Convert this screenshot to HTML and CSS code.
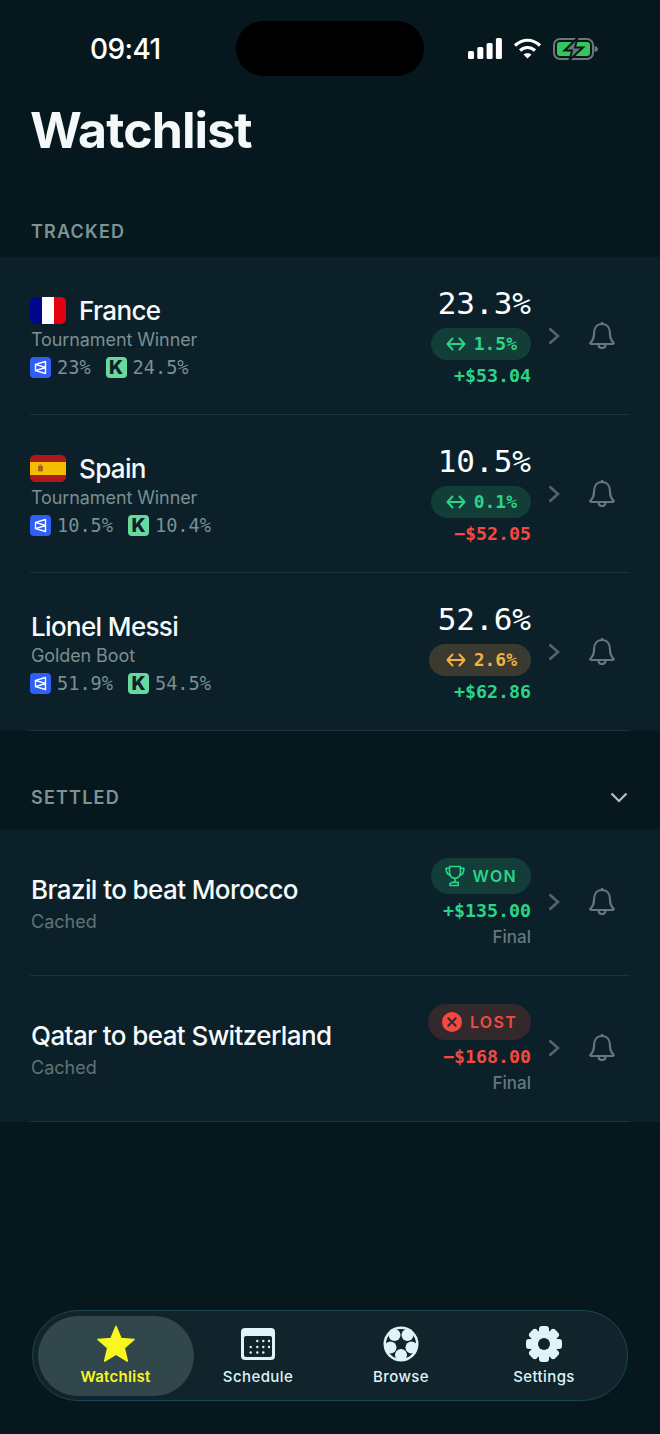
FILE: index.html
```html
<!DOCTYPE html>
<html>
<head>
	<title>Watchlist</title>
	<meta charset="UTF-8">
	<meta name="viewport" content="width=device-width, initial-scale=1.0">
	<link rel="stylesheet" href="styles.css">
</head>
<body>
	<svg class="sprites" width="0" height="0">
		<symbol id="chevron" viewBox="0 0 14 20"><path d="M2.5 2.5L11 10L2.5 17.5" fill="none" stroke="currentColor" stroke-width="2.6"/></symbol>
		<symbol id="bell" viewBox="0 0 26 28"><path d="M1.5 21.5C4.5 19 5 16.5 5 12.5C5 7 8 3 13 3C18 3 21 7 21 12.5C21 16.5 21.5 19 24.500 21.500C25 22.500 24.500 23 23.500 23H2.500C1.500 23 1 22.500 1.500 21.500Z M13 1V3 M9.500 23C9.500 25.500 11 27 13 27C15 27 16.500 25.500 16.500 23" fill="none" stroke="currentColor" stroke-width="2.200" stroke-linejoin="round"/></symbol>
		<symbol id="swap" viewBox="0 0 20 14"><path d="M6.500 1.500L1.500 7L6.500 12.500M13.500 1.500L18.500 7L13.500 12.500M1.500 7H18.500" fill="none" stroke="currentColor" stroke-width="2" stroke-linecap="round" stroke-linejoin="round"/></symbol>
		<symbol id="poly" viewBox="0 0 21 21"><rect width="21" height="21" rx="4" fill="#2f5ff6"/><path d="M15.500 4.500L5.500 7.300V13.700L15.500 16.500ZM5.500 7.300L15.500 10.500L5.500 13.700" fill="none" stroke="#fff" stroke-width="1.400" stroke-linejoin="round"/></symbol>
	</svg>

	<div class="page">
		<header class="status-bar">
			<div class="status-time">09:41</div>
			<div class="island"></div>
			<div class="status-icons">
				<svg width="34" height="21" viewBox="0 0 34 21" fill="#fff"><rect x="0" y="13" width="6" height="8" rx="1.500"/><rect x="9.300" y="9" width="6" height="12" rx="1.500"/><rect x="18.600" y="5" width="6" height="16" rx="1.500"/><rect x="27.900" y="0" width="6" height="21" rx="1.500"/></svg>
				<svg width="29" height="21" viewBox="0 0 29 21" fill="none" stroke="#fff" stroke-width="3.200"><path d="M2 7.500C9.500 .5 19.500 .5 27 7.500"/><path d="M7 12.500C11.500 8.500 17.500 8.500 22 12.500"/><path d="M14.500 20.500L10.500 16.500C12.500 14.800 16.500 14.800 18.500 16.500Z" fill="#fff" stroke="none"/></svg>
				<svg width="46" height="22" viewBox="0 0 46 22"><rect x="1" y="1" width="39" height="20" rx="6" fill="none" stroke="#6b7679" stroke-width="2"/><rect x="4" y="4" width="33" height="14" rx="3" fill="#35c759"/><path d="M41.500 8V14C44 13.500 45 12.500 45 11C45 9.500 44 8.500 41.500 8Z" fill="#6b7679"/><path d="M24.500 0L11.500 12.500H19L16.500 22L30 9.500H22Z" fill="#6b7679" stroke="#06181d" stroke-width="2"/></svg>
			</div>
		</header>

		<h1 class="page-title">Watchlist</h1>

		<div class="section-head section-tracked">TRACKED</div>
		<section class="card">
			<div class="row">
				<div class="info">
					<div class="name-line">
						<svg class="flag" viewBox="0 0 36 27"><rect width="12.500" height="27" fill="#00078a"/><rect x="12" width="12" height="27" fill="#fff"/><rect x="24" width="12" height="27" fill="#e3000f"/></svg>
						<span class="name">France</span>
					</div>
					<div class="sub">Tournament Winner</div>
					<div class="odds">
						<svg class="venue"><use href="#poly"/></svg><span class="odds-val">23%</span>
						<span class="kalshi">K</span><span class="odds-val">24.5%</span>
					</div>
				</div>
				<div class="figures">
					<div class="pct">23.3%</div>
					<div class="pill pill-green"><svg class="swap"><use href="#swap"/></svg>1.5%</div>
					<div class="money up">+$53.04</div>
				</div>
				<svg class="chevron"><use href="#chevron"/></svg>
				<svg class="bell"><use href="#bell"/></svg>
			</div>
			<div class="row">
				<div class="info">
					<div class="name-line">
						<svg class="flag" viewBox="0 0 36 27"><rect width="36" height="27" fill="#ae1a1c"/><rect y="7" width="36" height="13" fill="#f1bf00"/><rect x="8" y="10.500" width="5" height="6" rx="1.500" fill="#b0581e"/><rect x="9.500" y="9" width="2" height="2" fill="#c8853a"/></svg>
						<span class="name">Spain</span>
					</div>
					<div class="sub">Tournament Winner</div>
					<div class="odds">
						<svg class="venue"><use href="#poly"/></svg><span class="odds-val">10.5%</span>
						<span class="kalshi">K</span><span class="odds-val">10.4%</span>
					</div>
				</div>
				<div class="figures">
					<div class="pct">10.5%</div>
					<div class="pill pill-green"><svg class="swap"><use href="#swap"/></svg>0.1%</div>
					<div class="money down">−$52.05</div>
				</div>
				<svg class="chevron"><use href="#chevron"/></svg>
				<svg class="bell"><use href="#bell"/></svg>
			</div>
			<div class="row">
				<div class="info">
					<div class="name-line">
						<span class="name name-plain">Lionel Messi</span>
					</div>
					<div class="sub">Golden Boot</div>
					<div class="odds">
						<svg class="venue"><use href="#poly"/></svg><span class="odds-val">51.9%</span>
						<span class="kalshi">K</span><span class="odds-val">54.5%</span>
					</div>
				</div>
				<div class="figures">
					<div class="pct">52.6%</div>
					<div class="pill pill-amber"><svg class="swap"><use href="#swap"/></svg>2.6%</div>
					<div class="money up">+$62.86</div>
				</div>
				<svg class="chevron"><use href="#chevron"/></svg>
				<svg class="bell"><use href="#bell"/></svg>
			</div>
		</section>

		<div class="section-head section-settled">
			<span>SETTLED</span>
			<svg class="section-toggle" viewBox="0 0 18 11"><path d="M1.500 1.500L9 9L16.500 1.500" fill="none" stroke="currentColor" stroke-width="2.200"/></svg>
		</div>
		<section class="card">
			<div class="row row-settled">
				<div class="info">
					<div class="match">Brazil to beat Morocco</div>
					<div class="cached">Cached</div>
				</div>
				<div class="figures">
					<div class="pill pill-result pill-green">
						<svg class="result-icon" viewBox="0 0 22 24" fill="none" stroke="currentColor" stroke-width="1.800" stroke-linejoin="round"><path d="M5 1.500H17V8C17 12 14.500 14.500 11 14.500C7.500 14.500 5 12 5 8Z"/><path d="M5 3.500H1.200C1.200 8 2.500 10.500 6 11.500M17 3.500H20.800C20.800 8 19.500 10.500 16 11.500"/><path d="M11 14.500V19"/><path d="M7.500 19H14.500V22.500H5.500V20.500Z"/></svg>
						WON
					</div>
					<div class="money up">+$135.00</div>
					<div class="final">Final</div>
				</div>
				<svg class="chevron"><use href="#chevron"/></svg>
				<svg class="bell"><use href="#bell"/></svg>
			</div>
			<div class="row row-settled">
				<div class="info">
					<div class="match">Qatar to beat Switzerland</div>
					<div class="cached">Cached</div>
				</div>
				<div class="figures">
					<div class="pill pill-result pill-red">
						<svg class="result-icon" viewBox="0 0 20 20"><circle cx="10" cy="10" r="10" fill="currentColor"/><path d="M6.300 6.300L13.700 13.700M13.700 6.300L6.300 13.700" stroke="#33292c" stroke-width="2" stroke-linecap="round"/></svg>
						LOST
					</div>
					<div class="money down">−$168.00</div>
					<div class="final">Final</div>
				</div>
				<svg class="chevron"><use href="#chevron"/></svg>
				<svg class="bell"><use href="#bell"/></svg>
			</div>
		</section>

		<nav class="tab-bar">
			<div class="tab tab-active">
				<svg class="tab-icon" width="40" height="38" viewBox="0 0 40 38"><path d="M20 1.500L25 13.500L38 14.500L28.200 23L31.300 36L20 29L8.700 36L11.800 23L2 14.500L15 13.500Z" fill="currentColor" stroke="currentColor" stroke-width="1.600" stroke-linejoin="round"/></svg>
				<span>Watchlist</span>
			</div>
			<div class="tab">
				<svg class="tab-icon" width="36" height="36" viewBox="0 0 36 36"><rect x="1" y="2" width="34" height="32" rx="4" fill="currentColor"/><rect x="4" y="10" width="28" height="21" rx="2" fill="#11242b"/><g fill="currentColor"><circle cx="17.300" cy="15" r="1.200"/><circle cx="23.300" cy="15" r="1.200"/><circle cx="29" cy="15" r="1.200"/><circle cx="10.700" cy="21" r="1.200"/><circle cx="17.300" cy="21" r="1.200"/><circle cx="23.300" cy="21" r="1.200"/><circle cx="29" cy="21" r="1.200"/><circle cx="10.700" cy="26.500" r="1.200"/><circle cx="17.300" cy="26.500" r="1.200"/><circle cx="23.300" cy="26.500" r="1.200"/></g></svg>
				<span>Schedule</span>
			</div>
			<div class="tab">
				<svg class="tab-icon" width="36" height="36" viewBox="0 0 36 36"><circle cx="18" cy="18" r="17.500" fill="currentColor"/><circle cx="18" cy="18" r="15" fill="#11242b"/><g fill="currentColor"><circle cx="18" cy="29" r="6"/><circle cx="7.500" cy="21.500" r="6"/><circle cx="11.500" cy="9" r="6"/><circle cx="24.500" cy="9" r="6"/><circle cx="28.500" cy="21.500" r="6"/></g></svg>
				<span>Browse</span>
			</div>
			<div class="tab">
				<svg class="tab-icon" width="38" height="38" viewBox="0 0 38 38"><g fill="currentColor"><rect x="14" y="1" width="10" height="36" rx="3"/><rect x="14" y="1" width="10" height="36" rx="3" transform="rotate(45 19 19)"/><rect x="14" y="1" width="10" height="36" rx="3" transform="rotate(90 19 19)"/><rect x="14" y="1" width="10" height="36" rx="3" transform="rotate(135 19 19)"/><circle cx="19" cy="19" r="13"/></g><circle cx="19" cy="19" r="6" fill="#11242b"/></svg>
				<span>Settings</span>
			</div>
		</nav>
	</div>
</body>
</html>
```

FILE: styles.css
```css
* {
	box-sizing: border-box;
}

body {
	margin: 0;
	background-color: #06181d;
	font-family: "Inter", "Liberation Sans", sans-serif;
	color: #f4f8f8;
}

.sprites {
	display: block;
	height: 0;
}

.page {
	display: flex;
	flex-direction: column;
	height: 1434px;
	overflow: hidden;
}

/* status bar */
.status-bar {
	display: flex;
	align-items: center;
	height: 55px;
	margin-top: 21px;
}

.status-time {
	width: 236px;
	padding-left: 90px;
	font-size: 28px;
	font-weight: 500;
	letter-spacing: -0.6px;
	color: #fff;
}

.island {
	width: 188px;
	height: 55px;
	background-color: #000;
	border-radius: 28px;
}

.status-icons {
	display: flex;
	align-items: center;
	gap: 11px;
	padding-left: 44px;
}

.page-title {
	margin: 24px 0 0 30px;
	font-size: 50px;
	line-height: 60px;
	font-weight: 700;
	letter-spacing: -0.9px;
}

/* section headings */
.section-head {
	display: flex;
	justify-content: space-between;
	align-items: center;
	height: 24px;
	padding: 0 32px 0 31px;
	font-size: 18px;
	font-weight: 600;
	letter-spacing: 1.200px;
	color: #7c9496;
}

.section-tracked {
	margin-top: 59px;
	margin-bottom: 14px;
}

.section-settled {
	margin-top: 54px;
	margin-bottom: 20px;
}

.section-toggle {
	width: 18px;
	height: 11px;
	color: #b4c2c4;
}

.card {
	background-color: #0c2029;
}

/* rows */
.row {
	display: flex;
	align-items: center;
	height: 158px;
	margin: 0 30px;
	padding-top: 2px;
	border-bottom: 1px solid #1e323a;
}

.row-settled {
	height: 146.500px;
}

.info {
	flex: 1;
}

.name-line {
	display: flex;
	align-items: center;
	gap: 13px;
	height: 30px;
}

.flag {
	width: 36px;
	height: 27px;
	border-radius: 5px;
}

.name {
	font-size: 26px;
	font-weight: 500;
	letter-spacing: -0.65px;
	color: #f6fafa;
}

.name-plain {
	margin-left: 1px;
}

.sub {
	margin: 3px 0 0 1px;
	font-size: 18px;
	line-height: 24px;
	letter-spacing: -0.1px;
	color: #7a8f91;
}

.odds {
	display: flex;
	align-items: center;
	height: 22px;
	margin-top: 4px;
}

.venue {
	width: 21px;
	height: 21px;
}

.kalshi {
	display: flex;
	justify-content: center;
	align-items: center;
	width: 21px;
	height: 21px;
	margin-left: 15px;
	background-color: #66d99f;
	border-radius: 4px;
	font-size: 19px;
	font-weight: 800;
	color: #0c2029;
}

.odds-val {
	margin-left: 6px;
	font-family: "DejaVu Sans Mono", "Liberation Mono", monospace;
	font-size: 18.600px;
	color: #7a8f91;
}

.match {
	margin: 2px 0 0 1px;
	font-size: 26px;
	line-height: 32px;
	font-weight: 500;
	letter-spacing: -0.6px;
	color: #f6fafa;
}

.cached {
	margin: 4px 0 0 1px;
	font-size: 18px;
	line-height: 24px;
	color: #5f7478;
}

/* right-hand figures */
.figures {
	display: flex;
	flex-direction: column;
	align-items: flex-end;
}

.pct {
	font-family: "DejaVu Sans Mono", "Liberation Mono", monospace;
	font-size: 31px;
	line-height: 32px;
	font-weight: 500;
	color: #fff;
}

.pill {
	display: flex;
	align-items: center;
	gap: 8px;
	height: 32px;
	margin-top: 9px;
	padding: 0 14px 0 15px;
	border-radius: 16px;
	font-family: "DejaVu Sans Mono", "Liberation Mono", monospace;
	font-size: 18px;
	font-weight: 600;
}

.pill-green {
	background-color: #123d38;
	color: #2ad586;
}

.pill-amber {
	background-color: #3a3a30;
	color: #f2b13f;
	padding-left: 17px;
}

.pill-red {
	background-color: #33292c;
	color: #f4493f;
}

.pill-result {
	height: 36px;
	margin-top: 0;
	padding: 0 14px;
	border-radius: 18px;
	font-family: "Inter", "Liberation Sans", sans-serif;
	font-size: 16px;
	letter-spacing: 1.300px;
	font-weight: 600;
}

.swap {
	width: 20px;
	height: 14px;
}

.result-icon {
	width: 20px;
	height: 24px;
}

.money {
	margin-top: 5px;
	font-family: "DejaVu Sans Mono", "Liberation Mono", monospace;
	font-size: 18.300px;
	line-height: 22px;
	font-weight: 700;
}

.pill-result + .money {
	margin-top: 6px;
}

.up {
	color: #2ad586;
}

.down {
	color: #f4493f;
}

.final {
	margin-top: 4px;
	font-size: 17px;
	line-height: 22px;
	font-weight: 500;
	color: #66797d;
}

.chevron {
	flex: none;
	width: 14px;
	height: 20px;
	margin: 0 0 2px 16px;
	color: #566569;
}

.bell {
	flex: none;
	width: 26px;
	height: 28px;
	margin: 0 15px 4px 28px;
	color: #66787c;
}

/* tab bar */
.tab-bar {
	display: flex;
	height: 91px;
	margin: auto 32px 33px;
	padding: 4.500px;
	background-color: #11242b;
	border: 1.500px solid #1c4652;
	border-radius: 46px;
}

.tab {
	display: flex;
	flex-direction: column;
	align-items: center;
	justify-content: center;
	width: 143px;
	font-size: 15px;
	font-weight: 500;
	letter-spacing: 0.400px;
	color: #dff3f8;
}

.tab-active {
	flex: none;
	width: 156px;
	margin-right: -7px;
	background-color: #31474b;
	border-radius: 40px;
	font-weight: 600;
	letter-spacing: 0.300px;
	color: #f8f81e;
}

.tab-icon {
	height: 38px;
	margin-bottom: 4px;
}
```
